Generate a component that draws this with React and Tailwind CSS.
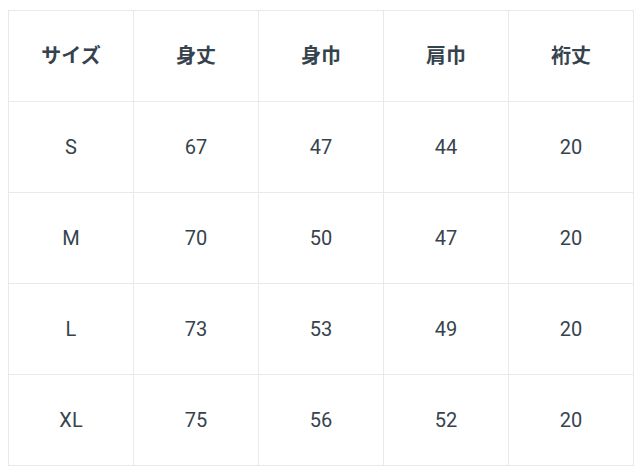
import React from 'react';

// サイズ表 (cm)
const headers = ['サイズ', '身丈', '身巾', '肩巾', '裄丈'];
const rows = [
    ['S', '67', '47', '44', '20'],
    ['M', '70', '50', '47', '20'],
    ['L', '73', '53', '49', '20'],
    ['XL', '75', '56', '52', '20'],
];

export default function App() {
    return (
        <div className="w-[640px] h-[474px] bg-white pt-[10px] pl-[8px] overflow-hidden"
            style={{ fontFamily: 'Roboto, "Noto Sans CJK JP", sans-serif' }}>
            <table className="border-collapse text-[#36434d] table-fixed w-[625px]">
                <thead>
                    <tr>
                        {headers.map(h => (
                            <th key={h} className="border border-[#e9e9e9] h-[91px] w-[125px] text-center align-middle text-[20px] font-bold">
                                {h}
                            </th>
                        ))}
                    </tr>
                </thead>
                <tbody>
                    {rows.map(r => (
                        <tr key={r[0]}>
                            {r.map((v, i) => (
                                <td key={i} className="border border-[#e9e9e9] h-[91px] text-center align-middle text-[20px]">
                                    {v}
                                </td>
                            ))}
                        </tr>
                    ))}
                </tbody>
            </table>
        </div>
    );
}
